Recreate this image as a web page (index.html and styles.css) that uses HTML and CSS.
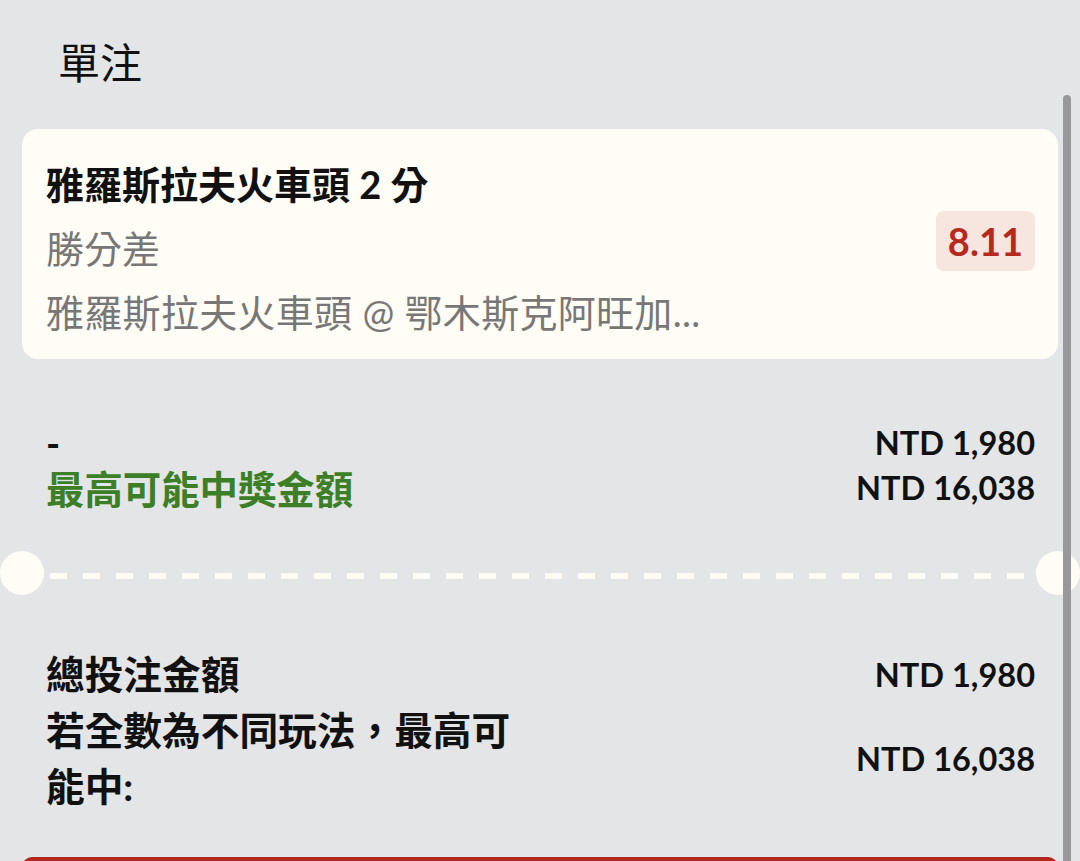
FILE: index.html
```html
<!DOCTYPE html>
<html lang="zh-Hant">
<head>
    <meta charset="UTF-8">
    <meta name="viewport" content="width=device-width, initial-scale=1.0">
    <title>單注</title>
    <link rel="stylesheet" href="styles.css">
</head>
<body>
    <div class="page">
        <div class="title">單注</div>

        <div class="bet-card">
            <div class="bet-info">
                <div class="bet-name">雅羅斯拉夫火車頭 2 分</div>
                <div class="bet-market">勝分差</div>
                <div class="bet-event">雅羅斯拉夫火車頭 @ 鄂木斯克阿旺加...</div>
            </div>
            <div class="odds">8.11</div>
        </div>

        <div class="stake-row">
            <div class="stake-left">
                <div class="stake-dash">-</div>
                <div class="win-label">最高可能中獎金額</div>
            </div>
            <div class="stake-right">
                <div class="amount">NTD 1,980</div>
                <div class="amount">NTD 16,038</div>
            </div>
        </div>

        <div class="divider">
            <span class="notch"></span>
            <span class="dashes"></span>
            <span class="notch"></span>
        </div>

        <div class="summary-row">
            <div class="summary-label">總投注金額</div>
            <div class="amount">NTD 1,980</div>
        </div>
        <div class="summary-row">
            <div class="summary-label">若全數為不同玩法，最高可能中:</div>
            <div class="amount">NTD 16,038</div>
        </div>

        <button class="place-bet"></button>
    </div>
    <div class="scrollbar"></div>
</body>
</html>
```

FILE: styles.css
```css
body {
    margin: 0;
    padding: 0;
    height: 861px;
    overflow: hidden;
    background-color: #e4e5e7;
    color: #111;
    font-family: "Lato", "Noto Sans CJK TC", sans-serif;
}
.page {
    padding: 0 22px;
}
.title {
    padding: 33px 0 0 36px;
    font-size: 42px;
    line-height: 60px;
    font-weight: 400;
}
.bet-card {
    margin-top: 36px;
    height: 230px;
    box-sizing: border-box;
    padding: 23px 23px 15px 24px;
    background-color: #fffdf5;
    border-radius: 16px;
    display: flex;
    justify-content: space-between;
    align-items: center;
}
.bet-info {
    font-size: 38px;
    line-height: 64px;
    align-self: flex-start;
}
.bet-name {
    font-weight: 700;
}
.bet-market,
.bet-event {
    color: #777;
}
.bet-event {
    letter-spacing: 0.3px;
}
.odds {
    margin-bottom: 15px;
    padding: 0 12px;
    height: 60px;
    line-height: 60px;
    background-color: #f6e6df;
    border-radius: 8px;
    color: #b7281e;
    font-size: 38px;
    font-weight: 700;
}
.stake-row {
    margin-top: 61px;
    padding: 0 23px 0 24px;
    display: flex;
    justify-content: space-between;
}
.stake-left {
    font-size: 38px;
    line-height: 46px;
    font-weight: 700;
}
.win-label {
    color: #3c7f26;
    font-size: 38.4px;
}
.stake-right {
    text-align: right;
    line-height: 45px;
}
.amount {
    font-size: 32.5px;
    font-weight: 700;
    white-space: nowrap;
}
.divider {
    margin: 39px -22px 0;
    height: 44px;
    display: flex;
    align-items: center;
}
.notch {
    width: 44px;
    height: 44px;
    border-radius: 50%;
    background-color: #fffdf5;
    flex-shrink: 0;
}
.dashes {
    flex: 1;
    height: 6px;
    margin: 5px 5px 0 6px;
    background: repeating-linear-gradient(90deg, #fffdf5 0 17px, transparent 17px 33px);
}
.summary-row {
    padding: 0 23px 0 24px;
    display: flex;
    justify-content: space-between;
    align-items: center;
}
.divider + .summary-row {
    margin-top: 51px;
}
.summary-label {
    max-width: 480px;
    font-size: 38.7px;
    line-height: 56px;
    font-weight: 700;
}
.place-bet {
    display: block;
    width: 100%;
    height: 80px;
    margin-top: 43px;
    border: none;
    border-radius: 10px;
    background-color: #b3261e;
}
.scrollbar {
    position: absolute;
    top: 95px;
    left: 1063px;
    width: 8px;
    height: 800px;
    border-radius: 4px;
    background-color: #98989b;
}
```
